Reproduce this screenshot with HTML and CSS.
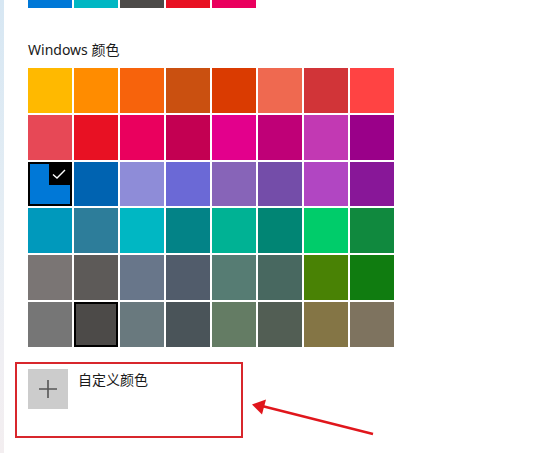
FILE: index.html
```html
<!DOCTYPE html>
<html lang="zh">
<head>
<meta charset="utf-8">
<link rel="stylesheet" href="styles.css">
</head>
<body>
<div class="page">
  <div class="strip"></div>
  <main class="main">
    <div class="recent">
      <div class="sw" style="background:#0078d7"></div>
      <div class="sw" style="background:#00b7c3"></div>
      <div class="sw" style="background:#4c4a48"></div>
      <div class="sw" style="background:#e81123"></div>
      <div class="sw" style="background:#ea005e"></div>
    </div>
    <h2 class="heading">Windows 颜色</h2>
    <div class="grid">
      <div class="cell" style="background:#ffb900"></div>
      <div class="cell" style="background:#ff8c00"></div>
      <div class="cell" style="background:#f7630c"></div>
      <div class="cell" style="background:#ca5010"></div>
      <div class="cell" style="background:#da3b01"></div>
      <div class="cell" style="background:#ef6950"></div>
      <div class="cell" style="background:#d13438"></div>
      <div class="cell" style="background:#ff4343"></div>

      <div class="cell" style="background:#e74856"></div>
      <div class="cell" style="background:#e81123"></div>
      <div class="cell" style="background:#ea005e"></div>
      <div class="cell" style="background:#c30052"></div>
      <div class="cell" style="background:#e3008c"></div>
      <div class="cell" style="background:#bf0077"></div>
      <div class="cell" style="background:#c239b3"></div>
      <div class="cell" style="background:#9a0089"></div>

      <div class="cell selected" style="background:#0078d7">
        <span class="tick"><svg width="22" height="22" viewBox="0 0 22 22"><path d="M4 11.5 L8 15 L16 7" fill="none" stroke="#fff" stroke-width="1.4"/></svg></span>
      </div>
      <div class="cell" style="background:#0063b1"></div>
      <div class="cell" style="background:#8e8cd8"></div>
      <div class="cell" style="background:#6b69d6"></div>
      <div class="cell" style="background:#8764b8"></div>
      <div class="cell" style="background:#744da9"></div>
      <div class="cell" style="background:#b146c2"></div>
      <div class="cell" style="background:#881798"></div>

      <div class="cell" style="background:#0099bc"></div>
      <div class="cell" style="background:#2d7d9a"></div>
      <div class="cell" style="background:#00b7c3"></div>
      <div class="cell" style="background:#038387"></div>
      <div class="cell" style="background:#00b294"></div>
      <div class="cell" style="background:#018574"></div>
      <div class="cell" style="background:#00cc6a"></div>
      <div class="cell" style="background:#10893e"></div>

      <div class="cell" style="background:#7a7574"></div>
      <div class="cell" style="background:#5d5a58"></div>
      <div class="cell" style="background:#68768a"></div>
      <div class="cell" style="background:#515c6b"></div>
      <div class="cell" style="background:#567c73"></div>
      <div class="cell" style="background:#486860"></div>
      <div class="cell" style="background:#498205"></div>
      <div class="cell" style="background:#107c10"></div>

      <div class="cell" style="background:#767676"></div>
      <div class="cell hover" style="background:#4c4a48"></div>
      <div class="cell" style="background:#69797e"></div>
      <div class="cell" style="background:#4a5459"></div>
      <div class="cell" style="background:#647c64"></div>
      <div class="cell" style="background:#525e54"></div>
      <div class="cell" style="background:#847545"></div>
      <div class="cell" style="background:#7e735f"></div>
    </div>
    <div class="custom">
      <div class="plus">
        <svg width="20" height="20" viewBox="0 0 20 20"><path d="M10 1 V19 M1 10 H19" stroke="#555" stroke-width="1.6" fill="none"/></svg>
      </div>
      <span class="custom-label">自定义颜色</span>
    </div>
  </main>
  <div class="annot-box"></div>
  <svg class="annot-arrow" width="541" height="453" viewBox="0 0 541 453">
    <path d="M373 434 L262 406" stroke="#e0161c" stroke-width="2.4" fill="none"/>
    <path d="M252 404.5 L266 399.5 L262 414.5 Z" fill="#e0161c"/>
  </svg>
</div>
</body>
</html>
```
FILE: styles.css
```css
html, body {
  margin: 0;
  padding: 0;
  background: #ffffff;
}
.page {
  position: relative;
  display: flex;
  width: 541px;
  height: 453px;
  overflow: hidden;
  font-family: "Noto Sans", "Noto Sans CJK SC", sans-serif;
  color: #1a1a1a;
}
.strip {
  width: 4px;
  flex: none;
  background: linear-gradient(180deg, #d7e7f3 0%, #e4edf4 45%, #f0eff3 80%, #f3eef0 100%);
}
.main {
  flex: 1;
  padding-left: 24px;
}
.recent {
  display: flex;
  gap: 2px;
}
.sw {
  width: 44px;
  height: 8px;
}
.heading {
  margin: 32px 0 8px;
  height: 20px;
  font-size: 14px;
  line-height: 20px;
  font-weight: 400;
}
.grid {
  display: grid;
  grid-template-columns: repeat(8, 44px);
  grid-auto-rows: 44.8px;
  gap: 2px;
}
.cell {
  position: relative;
  box-sizing: border-box;
}
.cell.selected {
  border: 2px solid #000;
}
.cell.hover {
  border: 2px solid #000;
}
.tick {
  position: absolute;
  top: -1px;
  right: -1px;
  width: 22px;
  height: 22px;
  background: #000;
  display: flex;
}
.custom {
  margin-top: 22px;
  display: flex;
  align-items: flex-start;
  gap: 10px;
}
.plus {
  width: 40px;
  height: 40px;
  background: #cccccc;
  display: flex;
  align-items: center;
  justify-content: center;
}
.custom-label {
  font-size: 14px;
  line-height: 20px;
  margin-top: 1px;
}
.annot-box {
  position: absolute;
  left: 15px;
  top: 362px;
  width: 228px;
  height: 76px;
  box-sizing: border-box;
  border: 2px solid #d8262c;
}
.annot-arrow {
  position: absolute;
  left: 0;
  top: 0;
  pointer-events: none;
}
```
